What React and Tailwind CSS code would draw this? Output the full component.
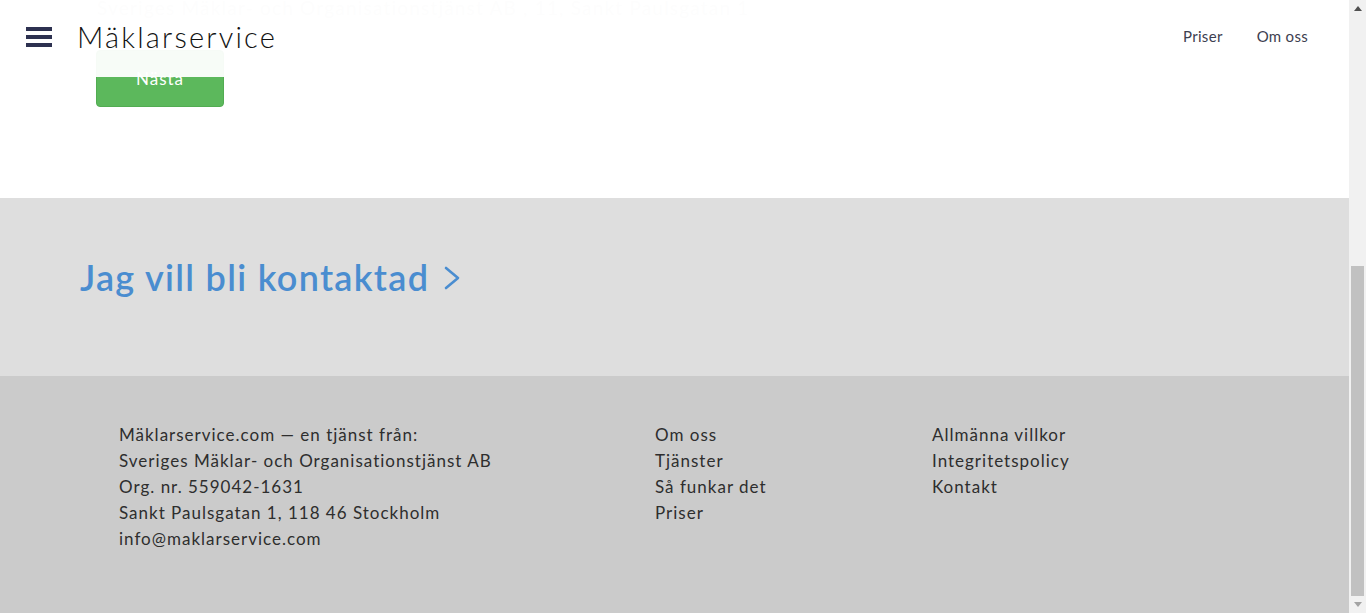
const font = { fontFamily: 'Lato, "Noto Sans", sans-serif' }

const orgLines = [
  'Mäklarservice.com — en tjänst från:',
  'Sveriges Mäklar- och Organisationstjänst AB',
  'Org. nr. 559042-1631',
  'Sankt Paulsgatan 1, 118 46 Stockholm',
  'info@maklarservice.com',
]

const siteLinks = ['Om oss', 'Tjänster', 'Så funkar det', 'Priser']
const legalLinks = ['Allmänna villkor', 'Integritetspolicy', 'Kontakt']

function Header() {
  return (
    <header className="absolute top-0 left-0 right-0 h-[77px] bg-white/95 flex items-center justify-between pl-[26px] pr-[41px]">
      <div className="flex items-center gap-[25px] -mt-[4px]">
        <div className="flex flex-col gap-[4px] w-[26px]">
          <span className="h-[4px] bg-[#2d3150]" />
          <span className="h-[4px] bg-[#2d3150]" />
          <span className="h-[4px] bg-[#2d3150]" />
        </div>
        <span className="text-[29px] font-light text-[#111] tracking-[2.2px]">Mäklarservice</span>
      </div>
      <nav className="flex gap-[34px] text-[15px] text-[#3d4050] tracking-[0.3px] -mt-[4px]">
        <a>Priser</a>
        <a>Om oss</a>
      </nav>
    </header>
  )
}

function Scrollbar() {
  return (
    <div className="w-[17px] h-full bg-[#f1f1f1] flex flex-col items-center">
      <div className="h-[17px] flex items-center justify-center text-[#505050]">
        <svg width="8" height="5" viewBox="0 0 8 5"><path d="M0 5 L4 0 L8 5 Z" fill="currentColor" /></svg>
      </div>
      <div className="flex-1 w-full flex flex-col justify-end px-[2px]">
        <div className="h-[330px] bg-[#c1c1c1]" />
      </div>
      <div className="h-[17px] flex items-center justify-center text-[#a3a3a3]">
        <svg width="8" height="5" viewBox="0 0 8 5"><path d="M0 0 L8 0 L4 5 Z" fill="currentColor" /></svg>
      </div>
    </div>
  )
}

export default function App() {
  return (
    <div className="h-[613px] w-full flex overflow-hidden bg-white" style={font}>
      <div className="relative flex-1 flex flex-col shadow-[inset_10px_0_12px_-8px_rgba(0,0,0,0.07)]">
        <section className="h-[198px] bg-white px-[97px] overflow-hidden">
          <p className="text-[19px] leading-[30px] -mt-[7px] text-[#cccccc] tracking-[1.2px] whitespace-nowrap">
            Sveriges Mäklar- och Organisationstjänst AB , 11, Sankt Paulsgatan 1
          </p>
          <button className="mt-[27px] -ml-[1px] w-[128px] h-[57px] rounded-[4px] bg-[#5cb85c] text-white text-[17px] tracking-[1px] border border-[#52ac52]">
            Nästa
          </button>
        </section>

        <section className="h-[178px] bg-[#dedede] px-[80px] flex items-center">
          <a className="flex items-center gap-[14px] text-[#4a8dd0] text-[36px] font-semibold tracking-[1.3px] -mt-[20px]">
            Jag vill bli kontaktad
            <svg width="18" height="26" viewBox="0 0 18 26" className="mt-[2px]">
              <path d="M3 3 L15 13 L3 23" fill="none" stroke="currentColor" strokeWidth="2.6" strokeLinecap="round" strokeLinejoin="round" />
            </svg>
          </a>
        </section>

        <footer className="flex-1 bg-[#cbcbcb] pt-[46px] pl-[119px] flex text-[17px] leading-[26px] text-[#2e2e2e] tracking-[1px]">
          <div className="w-[536px] flex flex-col">
            {orgLines.map(line => <span key={line}>{line}</span>)}
          </div>
          <div className="w-[277px] flex flex-col">
            {siteLinks.map(l => <a key={l}>{l}</a>)}
          </div>
          <div className="flex flex-col">
            {legalLinks.map(l => <a key={l}>{l}</a>)}
          </div>
        </footer>

        <Header />
      </div>
      <Scrollbar />
    </div>
  )
}
